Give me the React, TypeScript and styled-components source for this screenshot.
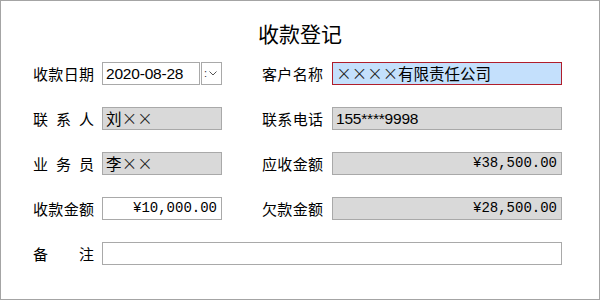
import React from "react";
import styled, { createGlobalStyle } from "styled-components";

const Global = createGlobalStyle`
  html, body { margin: 0; padding: 0; background: #fff; }
  #root { width: 600px; height: 300px; }
`;

const Frame = styled.div`
  box-sizing: border-box;
  width: 600px;
  height: 300px;
  border: 1px solid #a4a4a4;
  background: #fff;
  padding-top: 18px;
  font-family: "Noto Sans CJK SC", sans-serif;
  color: #000;
`;

const Title = styled.h1`
  margin: 0;
  font-size: 21px;
  font-weight: 400;
  line-height: 28px;
  text-align: center;
`;

const Form = styled.div`
  display: grid;
  grid-template-columns: 189px 300px;
  column-gap: 40px;
  row-gap: 22px;
  margin-top: 15px;
  padding-left: 32px;
`;

const Field = styled.div<{ $wide?: boolean; $gap?: number }>`
  display: flex;
  align-items: center;
  gap: ${(p) => p.$gap ?? 8}px;
  grid-column: ${(p) => (p.$wide ? "1 / -1" : "auto")};
  height: 23px;
`;

const Label = styled.label`
  width: 61px;
  flex: none;
  font-size: 15px;
  line-height: 23px;
  text-align: justify;
  text-align-last: justify;
`;

type Tone = "white" | "gray" | "focus";
type Face = "cjk" | "sans" | "mono";

const fonts: Record<Face, string> = {
  cjk: `"Noto Sans CJK SC", sans-serif`,
  sans: `"Liberation Sans", "Noto Sans CJK SC", sans-serif`,
  mono: `"Liberation Mono", "Noto Sans CJK SC", monospace`,
};

const Box = styled.div<{ $tone: Tone; $align?: "left" | "right"; $face?: Face; $w?: number }>`
  box-sizing: border-box;
  height: 23px;
  ${(p) => (p.$w ? `width: ${p.$w}px; flex: none;` : "flex: 1;")}
  border: 1px solid ${(p) => (p.$tone === "focus" ? "#b01e2b" : "#a9a9a9")};
  background: ${(p) =>
    p.$tone === "gray" ? "#d9d9d9" : p.$tone === "focus" ? "#c4e0fc" : "#fff"};
  padding: 0 4px 0 3px;
  font-family: ${(p) => fonts[p.$face ?? "cjk"]};
  font-size: ${(p) => (p.$face === "mono" ? "14px" : "15.5px")};
  letter-spacing: ${(p) => (p.$face === "sans" ? "-0.2px" : "0")};
  line-height: 21px;
  text-align: ${(p) => p.$align ?? "left"};
  white-space: nowrap;
  overflow: hidden;
`;

const Mark = styled.span`
  display: inline-block;
  width: 15.5px;
  text-align: center;
  font-family: "DejaVu Sans", sans-serif;
  font-weight: 200;
  font-size: 19px;
  line-height: 0;
  color: #222;
`;

const DateWrap = styled.div`
  display: flex;
  width: 120px;
  flex: none;
  height: 23px;
  gap: 1px;
`;

const Drop = styled.div`
  box-sizing: border-box;
  width: 21px;
  height: 23px;
  border: 1px solid #a9a9a9;
  background: #fff;
  display: flex;
  align-items: center;
  padding-left: 2px;
  gap: 2px;
  color: #333;
`;

const Colon = styled.span`
  font-family: "Liberation Sans", sans-serif;
  font-size: 11px;
  line-height: 1;
`;

const Xs = ({ n }: { n: number }) => (
  <>
    {Array.from({ length: n }).map((_, i) => (
      <Mark key={i}>×</Mark>
    ))}
  </>
);

export default function App() {
  return (
    <>
      <Global />
      <Frame>
        <Title>收款登记</Title>
        <Form>
          <Field>
            <Label>收款日期</Label>
            <DateWrap>
              <Box $tone="white" $face="sans" $w={98}>2020-08-28</Box>
              <Drop>
                <Colon>:</Colon>
                <svg width="8" height="5" viewBox="0 0 8 5">
                  <path d="M0.5 0.5 L4 4 L7.5 0.5" fill="none" stroke="#555" strokeWidth="1" />
                </svg>
              </Drop>
            </DateWrap>
          </Field>
          <Field $gap={9}>
            <Label>客户名称</Label>
            <Box $tone="focus">
              <Xs n={4} />有限责任公司
            </Box>
          </Field>

          <Field>
            <Label>联 系 人</Label>
            <Box $tone="gray">
              刘<Xs n={2} />
            </Box>
          </Field>
          <Field $gap={9}>
            <Label>联系电话</Label>
            <Box $tone="gray" $face="sans">155****9998</Box>
          </Field>

          <Field>
            <Label>业 务 员</Label>
            <Box $tone="gray">
              李<Xs n={2} />
            </Box>
          </Field>
          <Field $gap={9}>
            <Label>应收金额</Label>
            <Box $tone="gray" $face="mono" $align="right">¥38,500.00</Box>
          </Field>

          <Field>
            <Label>收款金额</Label>
            <Box $tone="white" $face="mono" $align="right">¥10,000.00</Box>
          </Field>
          <Field $gap={9}>
            <Label>欠款金额</Label>
            <Box $tone="gray" $face="mono" $align="right">¥28,500.00</Box>
          </Field>

          <Field $wide>
            <Label>备 注</Label>
            <Box $tone="white" />
          </Field>
        </Form>
      </Frame>
    </>
  );
}
